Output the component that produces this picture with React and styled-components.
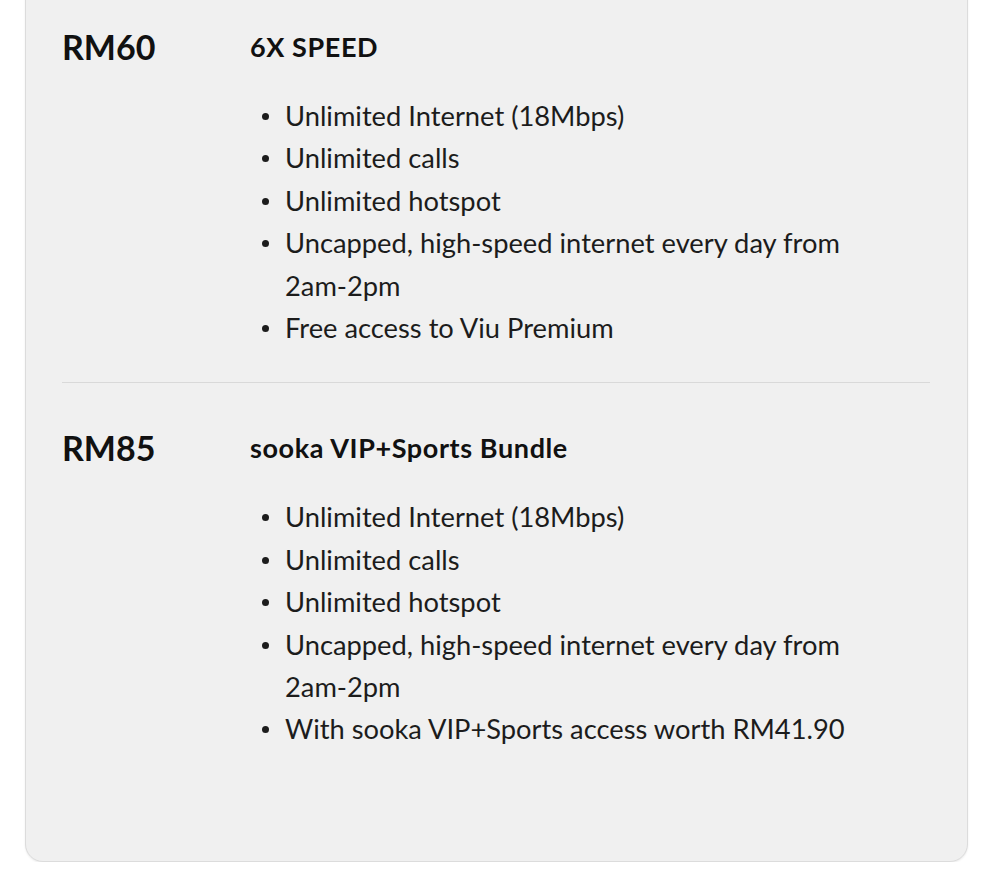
import React from 'react'
import styled, { createGlobalStyle } from 'styled-components';

const GlobalStyle = createGlobalStyle`
  body {
    margin: 0;
    background: #ffffff;
    font-family: Lato, "Open Sans", sans-serif;
    color: #1a1a1a;
    overflow: hidden;
  }
`;

const Card = styled.div`
  margin: -40px 32px 0 25px;
  background-color: #f0f0f0;
  border: 1px solid #dcdcdc;
  border-radius: 18px;
  box-shadow: 0 1px 2px rgba(0,0,0,0.08);
  padding: 0 37px 0 36px;
`;

const Plan = styled.section`
  display: grid;
  grid-template-columns: 188px 1fr;
  padding: ${p => p.$top}px 0 ${p => p.$bottom}px 0;
  border-bottom: ${p => p.$divider ? '1px solid #d9d9d9' : 'none'};
`;

const Price = styled.div`
  font-size: 34px;
  font-weight: 700;
  line-height: 40px;
  color: #111;
`;

const Details = styled.div`
  display: flex;
  flex-direction: column;
`;

const Title = styled.h3`
  margin: 0;
  font-size: 27px;
  font-weight: 700;
  letter-spacing: 0.6px;
  line-height: 40px;
  color: #111;
`;

const List = styled.ul`
  list-style: none;
  margin: 28px 0 0 0;
  padding: 0 0 0 35px;
`;

const Item = styled.li`
  position: relative;
  font-size: 27.3px;
  line-height: 42.4px;
  color: #1c1c1c;

  &::before {
    content: '';
    position: absolute;
    left: -23px;
    top: 18px;
    width: 7px;
    height: 7px;
    border-radius: 50%;
    background: #1c1c1c;
  }
`;

const NoBreak = styled.span`
  white-space: nowrap;
`;

const timeWindow = <>Uncapped, high-speed internet every day from <NoBreak>2am-2pm</NoBreak></>

const plans = [
  {
    price: 'RM60',
    title: '6X SPEED',
    items: [
      'Unlimited Internet (18Mbps)',
      'Unlimited calls',
      'Unlimited hotspot',
      timeWindow,
      'Free access to Viu Premium',
    ],
  },
  {
    price: 'RM85',
    title: 'sooka VIP+Sports Bundle',
    items: [
      'Unlimited Internet (18Mbps)',
      'Unlimited calls',
      'Unlimited hotspot',
      timeWindow,
      'With sooka VIP+Sports access worth RM41.90',
    ],
  },
]

export default function App() {
  return (
    <>
      <GlobalStyle />
      <Card>
        {plans.map((plan, i) => (
          <Plan
            key={plan.price}
            $top={i === 0 ? 66 : 45}
            $bottom={i === 0 ? 33 : 110}
            $divider={i === 0}
          >
            <Price>{plan.price}</Price>
            <Details>
              <Title>{plan.title}</Title>
              <List>
                {plan.items.map((item, j) => <Item key={j}>{item}</Item>)}
              </List>
            </Details>
          </Plan>
        ))}
      </Card>
    </>
  )
}
